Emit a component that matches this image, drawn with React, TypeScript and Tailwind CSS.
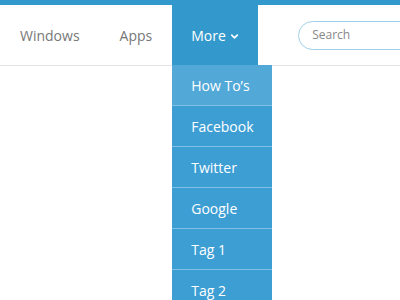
import { ChevronDown } from 'lucide-react'

const items = ['How To’s', 'Facebook', 'Twitter', 'Google', 'Tag 1', 'Tag 2']

export default function App() {
  return (
    <div className="w-[400px] h-[300px] overflow-hidden bg-white font-['Open_Sans',sans-serif]">
      <div className="h-[5px] bg-[#3399cc]" />
      <div className="relative flex h-[61px] items-stretch border-b border-[#e3e3e3]">
        <a className="flex shrink-0 items-center pl-[20px] pr-[20px] text-[14px] text-[#777]">Windows</a>
        <a className="flex shrink-0 items-center px-[20px] text-[14px] text-[#777]">Apps</a>
        <div className="relative flex w-[86px] shrink-0 items-center bg-[#3399cc] pl-[19px] text-[14px] text-white">
          More
          <ChevronDown className="ml-[3px] mt-[2px] h-[11px] w-[11px]" strokeWidth={3.5} />
          <ul className="absolute left-0 top-[60px] w-[100px] bg-[#3d9ed4]">
            {items.map((t, i) => (
              <li
                key={t}
                className={`flex items-center pl-[19px] text-[14px] text-white ${i > 0 ? 'h-[41px] border-t border-[#7fc0e4]' : 'h-[40px] bg-[#52a9d8]'}`}
              >
                {t}
              </li>
            ))}
          </ul>
        </div>
        <div className="flex shrink-0 items-center pl-[40px]">
          <div className="flex h-[29px] w-[130px] items-center rounded-full border border-[#9fd0ea] pl-[13px] text-[12px] text-[#888]">
            Search
          </div>
        </div>
      </div>
    </div>
  )
}
